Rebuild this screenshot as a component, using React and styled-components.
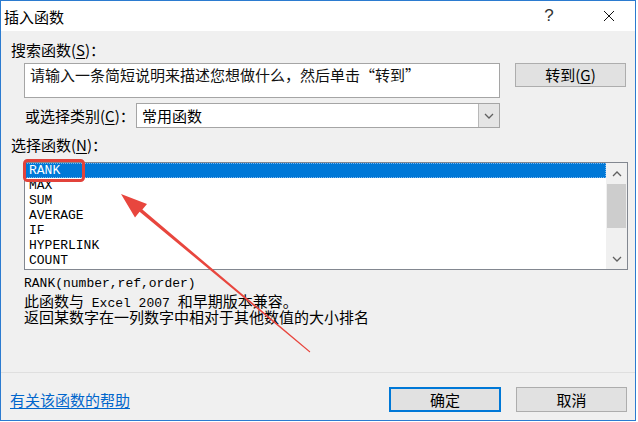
import React from 'react'
import styled, { createGlobalStyle } from 'styled-components'

const GlobalStyle = createGlobalStyle`
  body { margin: 0; background: #ffffff; }
  * { box-sizing: border-box; }
`

const ui = `"Noto Sans CJK SC", "Microsoft YaHei", sans-serif`
const mono = `"Liberation Mono", "Noto Sans CJK SC", monospace`

const Stage = styled.div`
  position: relative;
  width: 638px;
  height: 422px;
  font-family: ${ui};
  font-size: 15px;
  color: #000;
`

const Window = styled.div`
  width: 636px;
  height: 421px;
  border: 1px solid #2b7bd0;
  background: #f0f0f0;
  display: flex;
  flex-direction: column;
`

const TitleBar = styled.div`
  height: 30px;
  flex: none;
  background: #fff;
  display: flex;
  align-items: center;
  padding-left: 3px;
  padding-right: 3px;
`

const Title = styled.div`
  flex: 1;
  line-height: 20px;
  margin-top: 2px;
`

const TitleButton = styled.div`
  width: 46px;
  height: 30px;
  display: flex;
  align-items: center;
  justify-content: center;
  font-family: "Liberation Sans", sans-serif;
  font-size: 17px;
  font-weight: 300;
  color: #333;
  & + & { margin-left: 14px; }
`

const Body = styled.div`
  flex: 1;
  padding: 9px 8px 0 10px;
  display: flex;
  flex-direction: column;
`

const Label = styled.div`
  line-height: ${p => p.$lh || 20}px;
  height: ${p => p.$lh || 20}px;
  margin-top: ${p => p.$mt || 0}px;
  white-space: nowrap;
  u { text-decoration: underline; text-underline-offset: 2px; }
`

const SearchRow = styled.div`
  margin: 3px 0 0 13px;
  display: flex;
  align-items: flex-start;
  gap: 15px;
`

const SearchBox = styled.div`
  width: 476px;
  height: 35px;
  background: #fff;
  border: 1px solid #a5a5a5;
  padding: 1px 0 0 5px;
  line-height: 19px;
  color: #111;
`

const Button = styled.div`
  width: ${p => p.$w || 111}px;
  height: ${p => p.$h || 24}px;
  background: #e1e1e1;
  border: ${p => (p.$primary ? '2px solid #0078d7' : '1px solid #adadad')};
  display: flex;
  align-items: center;
  justify-content: center;
  line-height: 18px;
  u { text-decoration: underline; text-underline-offset: 2px; }
`

const CategoryRow = styled.div`
  margin: 5px 0 0 14px;
  display: flex;
  align-items: center;
  height: 25px;
`

const CategoryLabel = styled.div`
  width: 111px;
  line-height: 20px;
  white-space: nowrap;
  u { text-decoration: underline; text-underline-offset: 2px; }
`

const Select = styled.div`
  width: 364px;
  height: 25px;
  background: #fff;
  border: 1px solid #a5a5a5;
  display: flex;
`

const SelectValue = styled.div`
  flex: 1;
  padding-left: 5px;
  line-height: 23px;
`

const DropButton = styled.div`
  width: 21px;
  background: #e5e5e5;
  border-left: 1px solid #b8b8b8;
  display: flex;
  align-items: center;
  justify-content: center;
`

const ListBox = styled.div`
  margin: 8px 0 0 13px;
  width: 604px;
  height: 108px;
  background: #fff;
  border: 1px solid #828790;
  display: flex;
`

const Items = styled.div`
  flex: 1;
`

const Item = styled.div`
  height: 15px;
  line-height: 15px;
  padding-left: 4px;
  font-family: ${mono};
  font-size: 13px;
  color: ${p => (p.$selected ? '#fff' : '#000')};
  background: ${p => (p.$selected ? '#0078d7' : 'transparent')};
  outline: ${p => (p.$selected ? '1px dotted #7db6ec' : 'none')};
  outline-offset: -1px;
`

const ScrollBar = styled.div`
  width: 21px;
  background: #f0f0f0;
  display: flex;
  flex-direction: column;
`

const ScrollArrow = styled.div`
  height: 21px;
  display: flex;
  align-items: center;
  justify-content: center;
`

const ScrollTrack = styled.div`
  flex: 1;
  padding: 0 1px;
`

const Thumb = styled.div`
  height: 44px;
  background: #cdcdcd;
`

const Desc = styled.div`
  margin: 5px 0 0 13px;
`

const Signature = styled.div`
  font-family: ${mono};
  font-size: 13px;
  line-height: 18px;
  height: 18px;
`

const DescLine = styled.div`
  line-height: 16px;
  height: 16px;
  white-space: nowrap;
`

const Latin = styled.span`
  font-family: ${mono};
  font-size: 13px;
`

const Separator = styled.div`
  height: 1px;
  flex: none;
  background: #dfdfdf;
`

const Footer = styled.div`
  height: 47px;
  flex: none;
  padding: 14px 8px 0 9px;
  display: flex;
  align-items: flex-start;
  gap: 15px;
`

const HelpLink = styled.a`
  flex: 1;
  color: #0066cc;
  text-decoration: underline;
  text-underline-offset: 2px;
  line-height: 20px;
  margin-top: 3px;
`

const Annotation = styled.svg`
  position: absolute;
  left: 0;
  top: 0;
  pointer-events: none;
`

const Chevron = ({ up }) => (
  <svg width="10" height="6" viewBox="0 0 10 6">
    <polyline
      points={up ? '1,5 5,1 9,5' : '1,1 5,5 9,1'}
      fill="none"
      stroke="#606060"
      strokeWidth="1.3"
    />
  </svg>
)

const funcs = ['RANK', 'MAX', 'SUM', 'AVERAGE', 'IF', 'HYPERLINK', 'COUNT']

export default function App() {
  return (
    <Stage>
      <GlobalStyle />
      <Window>
        <TitleBar>
          <Title>插入函数</Title>
          <TitleButton>?</TitleButton>
          <TitleButton>
            <svg width="12" height="12" viewBox="0 0 12 12">
              <path d="M1 1 L11 11 M11 1 L1 11" stroke="#111" strokeWidth="1" />
            </svg>
          </TitleButton>
        </TitleBar>

        <Body>
          <Label>搜索函数(<u>S</u>)：</Label>
          <SearchRow>
            <SearchBox>请输入一条简短说明来描述您想做什么，然后单击“转到”</SearchBox>
            <Button>转到(<u>G</u>)</Button>
          </SearchRow>

          <CategoryRow>
            <CategoryLabel>或选择类别(<u>C</u>)：</CategoryLabel>
            <Select>
              <SelectValue>常用函数</SelectValue>
              <DropButton><Chevron /></DropButton>
            </Select>
          </CategoryRow>

          <Label $mt={8} $lh={18}>选择函数(<u>N</u>)：</Label>
          <ListBox>
            <Items>
              {funcs.map((f, i) => (
                <Item key={f} $selected={i === 0}>{f}</Item>
              ))}
            </Items>
            <ScrollBar>
              <ScrollArrow><Chevron up /></ScrollArrow>
              <ScrollTrack><Thumb /></ScrollTrack>
              <ScrollArrow><Chevron /></ScrollArrow>
            </ScrollBar>
          </ListBox>

          <Desc>
            <Signature>RANK(number,ref,order)</Signature>
            <DescLine>此函数与<Latin> Excel 2007 </Latin>和早期版本兼容。</DescLine>
            <DescLine>返回某数字在一列数字中相对于其他数值的大小排名</DescLine>
          </Desc>
        </Body>

        <Separator />
        <Footer>
          <HelpLink>有关该函数的帮助</HelpLink>
          <Button $primary $w={112} $h={25}>确定</Button>
          <Button $w={111} $h={25}>取消</Button>
        </Footer>
      </Window>

      <Annotation width="638" height="422" viewBox="0 0 638 422">
        <rect x="24.5" y="160.5" width="59" height="20" rx="3" fill="none" stroke="#e2433b" strokeWidth="3" />
        <polygon
          points="121,194 147,204 142.4,209.6 310.3,351.6 309.7,352.4 139.6,211.8 135,217.6"
          fill="#e8463e"
        />
      </Annotation>
    </Stage>
  )
}
